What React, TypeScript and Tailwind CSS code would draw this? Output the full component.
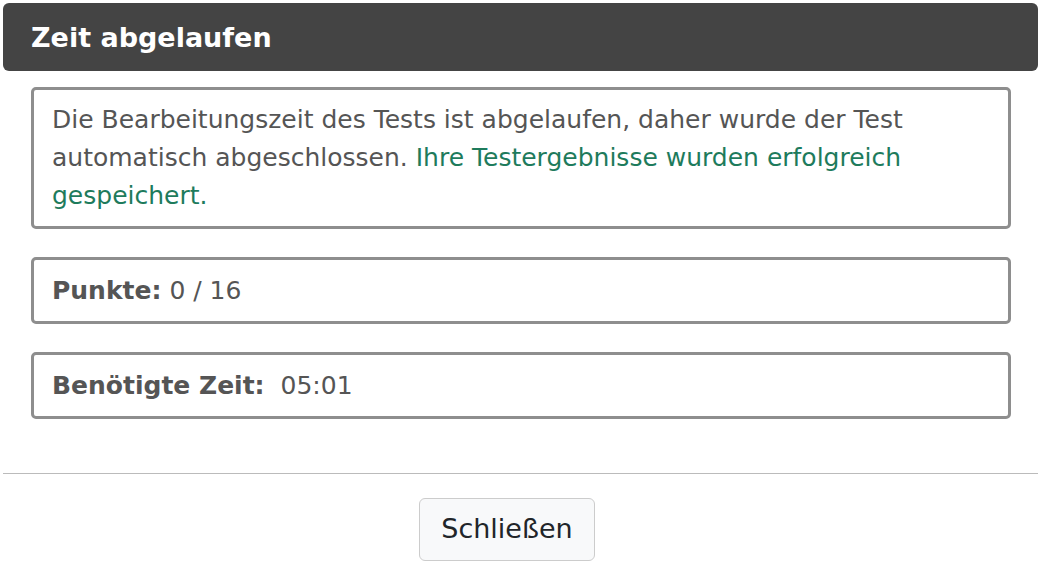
export default function App() {
  const font = { fontFamily: '"DejaVu Sans", Verdana, sans-serif' };
  return (
    <div className="w-[1041px] h-[574px] bg-white pt-[3px]" style={font}>
      {/* Header */}
      <div className="mx-[3px] h-[68px] bg-[#444444] rounded-[6px] flex items-center px-[28px]">
        <h2 className="text-white font-bold text-[27px] leading-none">Zeit abgelaufen</h2>
      </div>

      {/* Content */}
      <div className="px-[31px] pt-[16px] pb-[54px] flex flex-col gap-[28px] w-[1042px]">
        <div className="border-[3px] border-[#8e8e8e] rounded-[5px] px-[18px] py-[11px] text-[25px] leading-[38px] text-[#555555]">
          Die Bearbeitungszeit des Tests ist abgelaufen, daher wurde der Test automatisch abgeschlossen.{" "}
          <span className="text-[#1e7b5c]">Ihre Testergebnisse wurden erfolgreich gespeichert.</span>
        </div>
        <div className="border-[3px] border-[#8e8e8e] rounded-[5px] px-[18px] py-[11px] text-[25px] leading-[39px] text-[#555555]">
          <span className="font-bold">Punkte:</span> 0 / 16
        </div>
        <div className="border-[3px] border-[#8e8e8e] rounded-[5px] px-[18px] py-[11px] text-[25px] leading-[39px] text-[#555555]">
          <span className="font-bold">Benötigte Zeit:</span>&nbsp; 05:01
        </div>
      </div>

      {/* Footer */}
      <div className="mx-[3px] border-t border-[#bbbbbb] pt-[24px] pr-[27px] flex justify-center">
        <button className="w-[176px] h-[63px] bg-[#f8f9fa] border border-[#cccccc] rounded-[6px] text-[27px] text-[#212529]">
          Schließen
        </button>
      </div>
    </div>
  );
}
